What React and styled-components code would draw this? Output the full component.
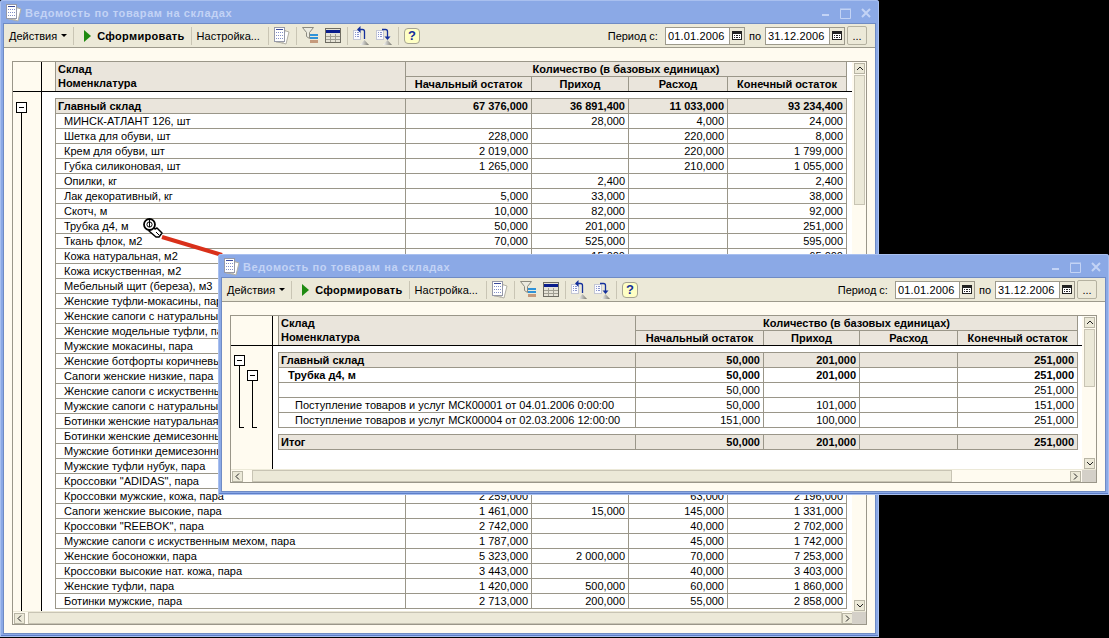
import React from "react";
import styled, { createGlobalStyle } from "styled-components";

const Global = createGlobalStyle`
  html, body { margin: 0; padding: 0; background: #000; }
  #root { width: 1109px; height: 638px; }
`;

const Desktop = styled.div`
  position: relative;
  width: 1109px;
  height: 638px;
  overflow: hidden;
  background: #000;
  font-family: "Liberation Sans", Arial, sans-serif;
  font-size: 11px;
  color: #000;
`;

const Win = styled.section`
  position: absolute;
  left: ${(p) => p.$left}px;
  top: ${(p) => p.$top}px;
  width: ${(p) => p.$width}px;
  height: ${(p) => p.$height}px;
  box-sizing: border-box;
  padding: 0 3px 3px;
  display: flex;
  flex-direction: column;
  background: #8ba9e6;
  border-radius: 3px 3px 0 0;
  box-shadow: inset 0 0 0 1px #a9c0ef, inset 0 -1px 0 1px #5f7fc8;
`;

const TitleBar = styled.header`
  flex: 0 0 23px;
  display: flex;
  align-items: center;
  padding: 3px 3px 0 3px;
  box-sizing: border-box;
`;

const TitleText = styled.h1`
  margin: 0 0 0 3px;
  font-size: 11px;
  font-weight: 700;
  color: #c3d3f5;
  letter-spacing: 0.6px;
  font-family: "Liberation Sans", Arial, sans-serif;
`;

const WinButtons = styled.div`
  margin-left: auto;
  display: flex;
  align-items: center;
  gap: 10px;
  padding-right: 2px;
  color: #c3d3f5;
`;

const MinGlyph = styled.svg`
  align-self: flex-end;
  margin-bottom: 3px;
  margin-right: 1px;
`;

const Client = styled.div`
  flex: 1;
  min-height: 0;
  display: flex;
  flex-direction: column;
  border: 1px solid #6f8bc4;
  background: #fffbf0;
`;

const Toolbar = styled.div`
  flex: 0 0 24px;
  box-sizing: border-box;
  display: flex;
  align-items: center;
  padding: 0 8px 0 5px;
  background: #ece9d8;
  border-bottom: 1px solid #9d9a8c;
  font-size: 11px;
`;

const Sep = styled.span`
  width: 1px;
  height: 18px;
  margin: 0 5px 0 ${(p) => p.$ml || 6}px;
  background: #c9c5b4;
`;

const Caret = styled.span`
  margin-left: 4px;
  width: 0;
  height: 0;
  border-left: 3px solid transparent;
  border-right: 3px solid transparent;
  border-top: 3px solid #000;
`;

const Play = styled.span`
  margin: 0 6px 0 5px;
  width: 0;
  height: 0;
  border-top: 6px solid transparent;
  border-bottom: 6px solid transparent;
  border-left: 7px solid #1f8a10;
`;

const Strong = styled.span`
  font-weight: 700;
  letter-spacing: 0.3px;
`;

const Icon = styled.svg`
  flex: 0 0 auto;
  display: block;
  margin-left: ${(p) => p.$ml || 0}px;
`;

const HelpIcon = styled.span`
  box-sizing: border-box;
  width: 16px;
  height: 16px;
  border: 1px solid #a5a393;
  border-radius: 4px;
  background: #ffffc4;
  color: #14309c;
  font-weight: 700;
  font-size: 13px;
  line-height: 14px;
  text-align: center;
`;

const PeriodGroup = styled.div`
  margin-left: auto;
  display: flex;
  align-items: center;
`;

const PeriodLabel = styled.span`
  margin: 0 ${(p) => p.$mr}px 0 ${(p) => p.$ml}px;
`;

const DateField = styled.div`
  box-sizing: border-box;
  width: 80px;
  height: 18px;
  display: flex;
  border: 1px solid #9d9a8c;
  background: #fff;
`;

const DateValue = styled.span`
  flex: 1;
  padding-left: 2px;
  line-height: 16px;
  letter-spacing: 0.15px;
`;

const CalButton = styled.span`
  flex: 0 0 14px;
  display: flex;
  align-items: center;
  justify-content: center;
  background: #ece9d8;
  border-left: 1px solid #9d9a8c;
`;

const DotsButton = styled.span`
  box-sizing: border-box;
  width: 20px;
  height: 19px;
  margin-left: 2px;
  border: 1px solid #b4b1a0;
  border-radius: 2px;
  text-align: center;
  line-height: 19px;
  font-size: 11px;
`;

const Content = styled.div`
  flex: 1;
  min-height: 0;
  display: flex;
  padding: 13px 8px 8px;
`;

const Frame = styled.div`
  flex: 1;
  min-width: 0;
  display: flex;
  flex-direction: column;
  border: 1px solid #9a9689;
  background: #fff;
  overflow: hidden;
`;

const Sheet = styled.div`
  flex: 1;
  min-height: 0;
  display: flex;
`;

const Report = styled.div`
  flex: 1;
  min-width: 0;
  display: flex;
  flex-direction: column;
  overflow: hidden;
`;

const HeadBand = styled.div`
  flex: 0 0 30px;
  box-sizing: border-box;
  display: flex;
  border-bottom: 1px solid #000;
`;

const TreeCell = styled.div`
  box-sizing: border-box;
  flex: 0 0 ${(p) => p.$tree + 1}px;
  border-right: 1px solid #000;
  background: #fffbf0;
  overflow: hidden;
`;

const GutterCell = styled.div`
  flex: 0 0 ${(p) => p.$gutter}px;
  background: ${(p) => (p.$head ? "#fffbf0" : "#fff")};
`;

const HeadGrid = styled.div`
  display: grid;
  grid-template-columns: ${(p) => p.$cols};
  grid-template-rows: 15px 14px;
  border-left: 1px solid #9a9689;
  background: #eae5dc;
  font-weight: 700;
`;

const NameHead = styled.div`
  grid-row: 1 / span 2;
  border-right: 1px solid #9a9689;
  padding-left: 2px;
  line-height: 14px;
`;

const QtyHead = styled.div`
  grid-column: 2 / span 4;
  border-bottom: 1px solid #9a9689;
  border-right: 1px solid #9a9689;
  text-align: center;
  line-height: 14px;
`;

const SubHead = styled.div`
  border-right: 1px solid #9a9689;
  text-align: center;
  line-height: 14px;
`;

const BodyBand = styled.div`
  flex: 1;
  min-height: 0;
  display: flex;
`;

const Rows = styled.div`
  padding-top: 6px;
`;

const RowBlock = styled.div`
  margin-bottom: ${(p) => p.$mb || 0}px;
`;

const Row = styled.div`
  display: grid;
  grid-template-columns: ${(p) => p.$cols};
  height: 15px;
  border-left: 1px solid #9a9689;
  border-bottom: 1px solid #9a9689;
  box-sizing: border-box;
  background: ${(p) => (p.$shade ? "#eae5dc" : "#fff")};
  font-weight: ${(p) => (p.$bold ? 700 : 400)};
  &:first-child {
    height: 16px;
    border-top: 1px solid #9a9689;
  }
`;

const NameCell = styled.div`
  border-right: 1px solid #9a9689;
  padding-left: ${(p) => p.$indent}px;
  line-height: 14px;
  white-space: nowrap;
  overflow: hidden;
`;

const NumCell = styled.div`
  border-right: 1px solid #9a9689;
  padding-right: 3px;
  text-align: right;
  line-height: 14px;
  white-space: nowrap;
`;

const VScroll = styled.div`
  flex: 0 0 14px;
  box-sizing: border-box;
  display: flex;
  flex-direction: column;
  padding: 1px 1px 0 2px;
  background: #fffbf0;
`;

const ScrollBtn = styled.span`
  box-sizing: border-box;
  flex: 0 0 11px;
  width: 11px;
  height: 11px;
  display: flex;
  align-items: center;
  justify-content: center;
  background: #ece9d8;
  border: 1px solid #b8b5a5;
`;

const VThumb = styled.div`
  box-sizing: border-box;
  flex: 0 0 ${(p) => p.$len}px;
  margin-top: 1px;
  background: #ece9d8;
  border: 1px solid #c8c4b4;
`;

const HScrollRow = styled.div`
  flex: 0 0 13px;
  box-sizing: border-box;
  display: flex;
  border-top: 1px solid #ece9d8;
  background: #fffbf0;
`;

const HTrack = styled.div`
  flex: 1;
  min-width: 0;
  display: flex;
  align-items: center;
  padding: 0 1px;
`;

const HThumb = styled.div`
  box-sizing: border-box;
  flex: 0 0 ${(p) => p.$len}px;
  height: 12px;
  margin-left: ${(p) => p.$ml}px;
  background: #ece9d8;
  border: 1px solid #c8c4b4;
`;

const Corner = styled.div`
  flex: 0 0 14px;
  background: #d4d0c8;
`;

const Spring = styled.div`
  flex: 1;
`;

const Overlay = styled.svg`
  position: absolute;
  left: ${(p) => p.$x}px;
  top: ${(p) => p.$y}px;
  pointer-events: none;
`;

const DocIcon = ({ ml }) => (
  <Icon $ml={ml} width="16" height="18" viewBox="0 0 16 18">
    <path d="M9 3l6 2-3 12-7-2z" fill="#fff" stroke="#b2b0a4" strokeWidth="1" />
    <path d="M6 2l5 1-2 13-7-1z" fill="#f4f3ec" stroke="#b2b0a4" strokeWidth="1" />
    <g shapeRendering="crispEdges">
      <rect x="0.5" y="0.5" width="10" height="14" fill="#fff" stroke="#9699a8" />
      <path d="M2 2h7v1H2z" fill="#3b4a9a" />
      <path d="M2 5h1v1H2zM4 5h1v1H4zM6 5h1v1H6zM8 5h1v1H8zM2 8h1v1H2zM4 8h1v1H4zM6 8h1v1H6zM8 8h1v1H8zM2 11h1v1H2zM4 11h1v1H4zM6 11h1v1H6zM8 11h1v1H8z" fill="#8390c8" />
    </g>
  </Icon>
);

const FilterIcon = ({ ml }) => (
  <Icon $ml={ml} width="16" height="17" viewBox="0 0 16 17">
    <path d="M0.5 0.5h11l-4 5v6l-3-2v-4z" fill="#ecebe0" stroke="#8b8a80" />
    <g shapeRendering="crispEdges">
      <rect x="8" y="7" width="8" height="2" fill="#2f93d8" />
      <rect x="8" y="10" width="8" height="2" fill="#2f93d8" />
      <rect x="8" y="13" width="8" height="3" fill="#c59a7c" />
    </g>
  </Icon>
);

const TableIcon = ({ ml }) => (
  <Icon $ml={ml} width="16" height="15" viewBox="0 0 16 15" shapeRendering="crispEdges">
    <rect x="0.5" y="0.5" width="15" height="14" fill="#e6e3d6" stroke="#6e6c62" />
    <rect x="1" y="2" width="14" height="3" fill="#0a1d8c" />
    <path d="M1 8h14M1 11h14M5.5 6v8M10.5 6v8" stroke="#a09e92" fill="none" />
  </Icon>
);

const ArrowDoc = ({ ml, down }) => (
  <Icon $ml={ml} width="16" height="19" viewBox="0 0 16 19">
    <defs>
      <linearGradient id="tri" x1="0" x2="1" y1="0" y2="0">
        <stop offset="0" stopColor="#fff" />
        <stop offset="1" stopColor="#77766c" />
      </linearGradient>
    </defs>
    <g shapeRendering="crispEdges">
      <rect x="0.5" y="4.5" width="7" height="9" fill="#fbfbff" stroke="#c4c7d4" />
      <path d="M2 6h1v1H2zM4 6h2v1H4zM2 8h1v1H2zM4 8h2v1H4zM2 10h1v1H2zM4 10h2v1H4z" fill="#8a96cc" />
    </g>
    {down ? (
      <g>
        <path d="M6 3.5h3.5a2 2 0 0 1 2 2V11" stroke="#14309c" strokeWidth="1.3" fill="none" />
        <path d="M8.5 10.5h6l-3 3.5z" fill="#14309c" />
      </g>
    ) : (
      <g>
        <path d="M7 3.5h2.5a2 2 0 0 1 2 2V13" stroke="#14309c" strokeWidth="1.3" fill="none" />
        <path d="M7.5 0l-3.5 3.5 3.5 3.5z" fill="#14309c" />
      </g>
    )}
    <path d="M11.5 14l4.5 5H7z" fill="url(#tri)" />
  </Icon>
);

const CalIcon = () => (
  <svg width="10" height="9" viewBox="0 0 10 9" shapeRendering="crispEdges">
    <rect x="0.5" y="0.5" width="9" height="8" fill="#fff" stroke="#222" />
    <rect x="1" y="1" width="8" height="2" fill="#222" />
    <path d="M2 4h1v1H2zM4 4h2v1H4zM7 4h1v1H7zM2 6h1v1H2zM4 6h2v1H4zM7 6h1v1H7z" fill="#222" />
  </svg>
);

const Chevron = ({ dir }) => {
  const d = { up: "M1 5l3-3 3 3", down: "M1 2l3 3 3-3", left: "M5 0.5l-3 3 3 3", right: "M2 0.5l3 3-3 3" }[dir];
  return (
    <svg width="8" height="7" viewBox="0 0 8 7">
      <path d={d} fill="none" stroke="#222" strokeWidth="1" />
    </svg>
  );
};

const WindowControls = () => (
  <WinButtons>
    <MinGlyph width="7" height="2" viewBox="0 0 7 2">
      <rect width="7" height="2" fill="currentColor" />
    </MinGlyph>
    <svg width="11" height="11" viewBox="0 0 11 11">
      <path d="M0.5 1.5h10v9h-10zM0 1h11" fill="none" stroke="currentColor" />
    </svg>
    <svg width="10" height="10" viewBox="0 0 10 10">
      <path d="M1 1l8 8M9 1l-8 8" fill="none" stroke="currentColor" strokeWidth="2" />
    </svg>
  </WinButtons>
);

const ReportToolbar = () => (
  <Toolbar>
    <span>Действия</span>
    <Caret />
    <Sep />
    <Play />
    <Strong>Сформировать</Strong>
    <Sep />
    <span>Настройка...</span>
    <Sep $ml={8} />
    <DocIcon />
    <Sep />
    <FilterIcon />
    <TableIcon ml={7} />
    <Sep />
    <ArrowDoc />
    <ArrowDoc ml={7} down />
    <Sep />
    <HelpIcon>?</HelpIcon>
    <PeriodGroup>
      <PeriodLabel $ml={0} $mr={7}>Период с:</PeriodLabel>
      <DateField>
        <DateValue>01.01.2006</DateValue>
        <CalButton><CalIcon /></CalButton>
      </DateField>
      <PeriodLabel $ml={4} $mr={4}>по</PeriodLabel>
      <DateField>
        <DateValue>31.12.2006</DateValue>
        <CalButton><CalIcon /></CalButton>
      </DateField>
      <DotsButton>...</DotsButton>
    </PeriodGroup>
  </Toolbar>
);

const TableHead = ({ cols }) => (
  <HeadGrid $cols={cols}>
    <NameHead>Склад<br />Номенклатура</NameHead>
    <QtyHead>Количество (в базовых единицах)</QtyHead>
    <SubHead>Начальный остаток</SubHead>
    <SubHead>Приход</SubHead>
    <SubHead>Расход</SubHead>
    <SubHead>Конечный остаток</SubHead>
  </HeadGrid>
);

const DataRow = ({ cols, row }) => (
  <Row $cols={cols} $shade={row.shade} $bold={row.bold}>
    <NameCell $indent={row.indent}>{row.name}</NameCell>
    {row.v.map((x, i) => <NumCell key={i}>{x}</NumCell>)}
  </Row>
);

const item = (name, a, b, c, d) => ({ name, indent: 8, v: [a, b, c, d] });

const backRows = [
  { name: "Главный склад", indent: 2, shade: true, bold: true, v: ["67 376,000", "36 891,400", "11 033,000", "93 234,400"] },
  item("МИНСК-АТЛАНТ 126, шт", "", "28,000", "4,000", "24,000"),
  item("Шетка для обуви, шт", "228,000", "", "220,000", "8,000"),
  item("Крем для обуви, шт", "2 019,000", "", "220,000", "1 799,000"),
  item("Губка силиконовая, шт", "1 265,000", "", "210,000", "1 055,000"),
  item("Опилки, кг", "", "2,400", "", "2,400"),
  item("Лак декоративный, кг", "5,000", "33,000", "", "38,000"),
  item("Скотч, м", "10,000", "82,000", "", "92,000"),
  item("Трубка д4, м", "50,000", "201,000", "", "251,000"),
  item("Ткань флок, м2", "70,000", "525,000", "", "595,000"),
  item("Кожа натуральная, м2", "", "15,000", "", "65,000"),
  item("Кожа искуственная, м2", "", "", "", ""),
  item("Мебельный щит (береза), м3", "", "", "", ""),
  item("Женские туфли-мокасины, пара", "", "", "", ""),
  item("Женские сапоги с натуральным", "", "", "", ""),
  item("Женские модельные туфли, пара", "", "", "", ""),
  item("Мужские мокасины, пара", "", "", "", ""),
  item("Женские ботфорты коричневые", "", "", "", ""),
  item("Сапоги женские низкие, пара", "", "", "", ""),
  item("Женские сапоги с искуственным", "", "", "", ""),
  item("Мужские сапоги с натуральным", "", "", "", ""),
  item("Ботинки женские натуральная", "", "", "", ""),
  item("Ботинки женские демисезонные", "", "", "", ""),
  item("Мужские ботинки демисезонные", "", "", "", ""),
  item("Мужские туфли нубук, пара", "", "", "", ""),
  item("Кроссовки \"ADIDAS\", пара", "", "", "", ""),
  item("Кроссовки мужские, кожа, пара", "2 259,000", "", "63,000", "2 196,000"),
  item("Сапоги женские высокие, пара", "1 461,000", "15,000", "145,000", "1 331,000"),
  item("Кроссовки \"REEBOK\", пара", "2 742,000", "", "40,000", "2 702,000"),
  item("Мужские сапоги с искуственным мехом, пара", "1 787,000", "", "45,000", "1 742,000"),
  item("Женские босоножки, пара", "5 323,000", "2 000,000", "70,000", "7 253,000"),
  item("Кроссовки высокие нат. кожа, пара", "3 443,000", "", "40,000", "3 403,000"),
  item("Женские туфли, пара", "1 420,000", "500,000", "60,000", "1 860,000"),
  item("Ботинки мужские, пара", "2 713,000", "200,000", "55,000", "2 858,000"),
];

const frontRows = [
  { name: "Главный склад", indent: 2, shade: true, bold: true, v: ["50,000", "201,000", "", "251,000"] },
  { name: "Трубка д4, м", indent: 9, bold: true, v: ["50,000", "201,000", "", "251,000"] },
  { name: "", indent: 9, v: ["50,000", "", "", "251,000"] },
  { name: "Поступление товаров и услуг МСК00001 от 04.01.2006 0:00:00", indent: 16, v: ["50,000", "101,000", "", "151,000"] },
  { name: "Поступление товаров и услуг МСК00004 от 02.03.2006 12:00:00", indent: 16, v: ["151,000", "100,000", "", "251,000"] },
];

const totalRow = { name: "Итог", indent: 2, shade: true, bold: true, v: ["50,000", "201,000", "", "251,000"] };

const BACK_COLS = "350px 126px 97px 99px 119px";
const FRONT_COLS = "357px 128px 96px 98px 120px";

const TreeBoxPath = ({ x, y }) => (
  <g shapeRendering="crispEdges">
    <rect x={x + 0.5} y={y + 0.5} width="10" height="10" rx="1" fill="#fff" stroke="#000" />
    <path d={`M${x + 3} ${y + 5.5}h5`} stroke="#000" fill="none" />
  </g>
);

const Scrollbars = ({ thumb }) => (
  <VScroll>
    <ScrollBtn><Chevron dir="up" /></ScrollBtn>
    <VThumb $len={thumb} />
    <Spring />
    <ScrollBtn><Chevron dir="down" /></ScrollBtn>
  </VScroll>
);

const HBar = ({ ml, len }) => (
  <HScrollRow>
    <HTrack>
      <ScrollBtn><Chevron dir="left" /></ScrollBtn>
      <HThumb $ml={ml} $len={len} />
      <Spring />
      <ScrollBtn><Chevron dir="right" /></ScrollBtn>
    </HTrack>
    <Corner />
  </HScrollRow>
);

export default function App() {
  return (
    <Desktop>
      <Global />
      <Win $left={0} $top={0} $width={879} $height={637}>
        <TitleBar>
          <DocIcon />
          <TitleText>Ведомость по товарам на складах</TitleText>
          <WindowControls />
        </TitleBar>
        <Client>
          <ReportToolbar />
          <Content>
            <Frame>
              <Sheet>
                <Report>
                  <HeadBand>
                    <TreeCell $tree={28} />
                    <GutterCell $head $gutter={13} />
                    <TableHead cols={BACK_COLS} />
                  </HeadBand>
                  <BodyBand>
                    <TreeCell $tree={28}>
                      <svg width="28" height="522" viewBox="0 0 28 522" shapeRendering="crispEdges">
                        <path d="M8.5 16V522" stroke="#000" fill="none" />
                        <TreeBoxPath x={3} y={10} />
                      </svg>
                    </TreeCell>
                    <GutterCell $gutter={13} />
                    <Rows>
                      <RowBlock>
                        {backRows.map((r, i) => <DataRow key={i} cols={BACK_COLS} row={r} />)}
                      </RowBlock>
                    </Rows>
                  </BodyBand>
                </Report>
                <Scrollbars thumb={130} />
              </Sheet>
              <HBar ml={3} len={814} />
            </Frame>
          </Content>
        </Client>
      </Win>

      <Overlay $x={150} $y={214} width="80" height="48" viewBox="0 0 80 48">
        <path d="M12 23L72 41" stroke="#d9301a" strokeWidth="4" fill="none" />
      </Overlay>
      <Overlay $x={142} $y={217} width="21" height="21" viewBox="0 0 21 21">
        <path d="M9 11l2-1 2 2 2-1 5 5-3 4h-3l-7-6z" fill="#fff" stroke="#000" strokeWidth="1.5" strokeLinejoin="round" />
        <circle cx="7.5" cy="7.5" r="5.5" fill="#fff" stroke="#000" strokeWidth="1.8" />
        <circle cx="7.5" cy="7.5" r="2.6" fill="none" stroke="#000" />
        <path d="M7.5 3v7M14 15l3 3" stroke="#000" />
      </Overlay>

      <Win $left={218} $top={254} $width={891} $height={241}>
        <TitleBar>
          <DocIcon />
          <TitleText>Ведомость по товарам на складах</TitleText>
          <WindowControls />
        </TitleBar>
        <Client>
          <ReportToolbar />
          <Content>
            <Frame>
              <Sheet>
                <Report>
                  <HeadBand>
                    <TreeCell $tree={41} />
                    <GutterCell $head $gutter={5} />
                    <TableHead cols={FRONT_COLS} />
                  </HeadBand>
                  <BodyBand>
                    <TreeCell $tree={41}>
                      <svg width="41" height="90" viewBox="0 0 41 90" shapeRendering="crispEdges">
                        <path d="M8.5 12V81.5H13M21.5 28V81.5H26" stroke="#000" fill="none" />
                        <TreeBoxPath x={3} y={9} />
                        <TreeBoxPath x={16} y={24} />
                      </svg>
                    </TreeCell>
                    <GutterCell $gutter={5} />
                    <Rows>
                      <RowBlock $mb={6}>
                        {frontRows.map((r, i) => <DataRow key={i} cols={FRONT_COLS} row={r} />)}
                      </RowBlock>
                      <RowBlock>
                        <DataRow cols={FRONT_COLS} row={totalRow} />
                      </RowBlock>
                    </Rows>
                  </BodyBand>
                </Report>
                <Scrollbars thumb={58} />
              </Sheet>
              <HBar ml={9} len={700} />
            </Frame>
          </Content>
        </Client>
      </Win>
    </Desktop>
  );
}
